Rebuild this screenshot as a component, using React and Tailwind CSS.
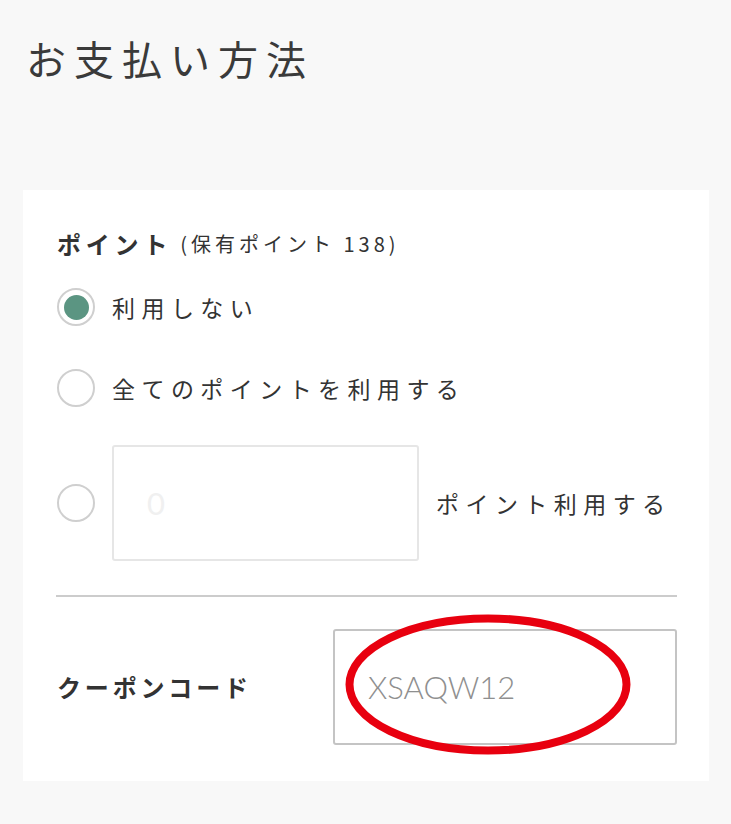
import React from "react";

const jp = { fontFamily: '"Noto Sans CJK JP", "Noto Sans", sans-serif' };

function Radio({ checked }) {
  return (
    <div className="w-[38px] h-[38px] shrink-0 rounded-full border-2 border-[#cfcfcf] bg-white flex items-center justify-center">
      {checked && <div className="w-[25px] h-[25px] rounded-full bg-[#5b9582]" />}
    </div>
  );
}

export default function App() {
  return (
    <div className="w-[731px] h-[824px] bg-[#f8f8f8] text-[#333]" style={jp}>
      <h1 className="pt-[30px] pl-[26px] text-[40px] leading-[57px] tracking-[0.2em] font-normal text-[#3a3a3a]">
        お支払い方法
      </h1>
      <div className="mt-[103px] ml-[23px] mr-[22px] bg-white pl-[34px] pr-[32px] pt-[38px] pb-[36px]">
        <div className="flex items-center h-[32px]">
          <span className="text-[24px] font-bold tracking-[0.2em] text-[#333]">ポイント</span>
          <span className="ml-[8px] text-[20px] tracking-[0.2em] text-[#333]">(保有ポイント 138)</span>
        </div>
        <div className="mt-[27px] flex items-center h-[40px] gap-[17px]">
          <Radio checked />
          <span className="text-[23px] tracking-[0.28em]">利用しない</span>
        </div>
        <div className="mt-[41px] flex items-center h-[40px] gap-[17px]">
          <Radio />
          <span className="text-[23px] tracking-[0.28em]">全てのポイントを利用する</span>
        </div>
        <div className="mt-[37px] flex items-center gap-[17px]">
          <Radio />
          <div className="w-[307px] h-[116px] border-2 border-[#e6e6e6] rounded-[3px] flex items-center pl-[33px]">
            <span className="text-[31px] text-[#f0f0f0]" style={{ fontFamily: 'Lato, sans-serif' }}>0</span>
          </div>
          <span className="text-[23px] tracking-[0.28em]">ポイント利用する</span>
        </div>
        <div className="mt-[34px] -ml-[1px] h-[2px] bg-[#cccccc]" />
        <div className="mt-[32px] flex items-center">
          <span className="w-[276px] text-[24px] font-bold tracking-[0.16em] text-[#333]">クーポンコード</span>
          <div className="relative w-[344px] h-[116px] border-2 border-[#c4c4c4] rounded-[3px] flex items-center pl-[33px]">
            <span className="text-[31px] font-light text-[#8f8f8f]" style={{ fontFamily: 'Lato, sans-serif' }}>XSAQW12</span>
            <svg className="absolute left-[10px] -top-[17px]" width="286" height="141" viewBox="0 0 286 141">
              <ellipse cx="143" cy="70.5" rx="138.5" ry="66" fill="none" stroke="#e8000f" strokeWidth="8" />
            </svg>
          </div>
        </div>
      </div>
    </div>
  );
}
